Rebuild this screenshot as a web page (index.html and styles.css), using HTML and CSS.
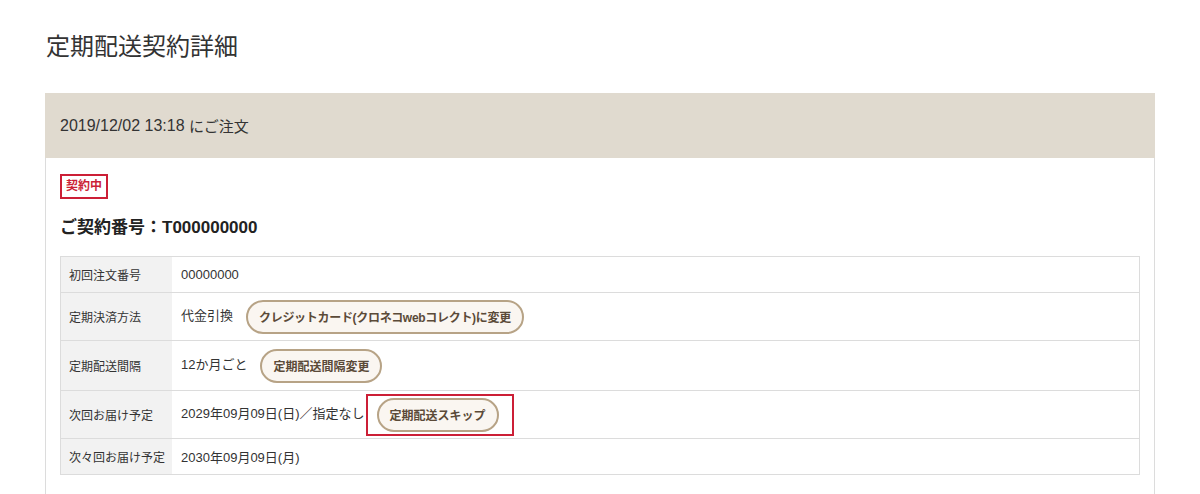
FILE: index.html
```html
<!DOCTYPE html>
<html lang="ja">
<head>
<meta charset="utf-8">
<title>定期配送契約詳細</title>
<link rel="stylesheet" href="styles.css">
</head>
<body>
<div class="page">
  <h1 class="title">定期配送契約詳細</h1>
  <section class="card">
    <div class="card-head">2019/12/02 13:18 <span class="jp">にご注文</span></div>
    <div class="card-body">
      <span class="badge">契約中</span>
      <h2 class="contract">ご契約番号：T000000000</h2>
      <table class="info">
        <tr class="r-s">
          <th>初回注文番号</th>
          <td>00000000</td>
        </tr>
        <tr class="r-m">
          <th>定期決済方法</th>
          <td>代金引換<button class="pill pill-tight">クレジットカード(クロネコwebコレクト)に変更</button></td>
        </tr>
        <tr class="r-l">
          <th>定期配送間隔</th>
          <td>12か月ごと<button class="pill">定期配送間隔変更</button></td>
        </tr>
        <tr class="r-m">
          <th>次回お届け予定</th>
          <td>2029年09月09日(日)／指定なし<span class="highlight"><button class="pill">定期配送スキップ</button></span></td>
        </tr>
        <tr class="r-s">
          <th>次々回お届け予定</th>
          <td>2030年09月09日(月)</td>
        </tr>
      </table>
    </div>
  </section>
</div>
</body>
</html>
```
FILE: styles.css
```css
html, body {
  margin: 0;
  padding: 0;
  background: #fff;
}
body {
  font-family: "Liberation Sans", "Noto Sans CJK JP", sans-serif;
  color: #333;
}
.page {
  padding: 29px 0 0 45px;
  width: 1110px;
}
.title {
  margin: 0 0 28px 1px;
  font-size: 24px;
  line-height: 36px;
  font-weight: normal;
  color: #333;
}
.card {
  border: 1px solid #dcdcdc;
  border-top: none;
  min-height: 420px;
}
.card-head {
  background: #e0dacf;
  height: 65px;
  display: flex;
  align-items: center;
  margin: 0 -1px;
  padding: 0 14px 0 15px;
  font-size: 16px;
  color: #333;
  white-space: pre;
}
.card-head .jp {
  font-size: 15px;
}
.card-body {
  padding: 16px 14px 0;
}
.badge {
  display: inline-block;
  border: 2px solid #cc1f36;
  color: #cc1f36;
  font-size: 12px;
  font-weight: bold;
  line-height: 17px;
  padding: 2px 4px;
}
.contract {
  margin: 17px 0 16px;
  font-size: 17px;
  line-height: 24px;
  font-weight: bold;
  color: #222;
}
.info {
  width: 100%;
  border-collapse: collapse;
  border: 1px solid #dcdcdc;
}
.info th, .info td {
  border-top: 1px solid #dcdcdc;
  border-bottom: 1px solid #dcdcdc;
  padding: 0;
  vertical-align: middle;
}
.info th {
  width: 103px;
  background: #f2f2f2;
  text-align: left;
  font-weight: normal;
  font-size: 12px;
  color: #333;
  padding-left: 8px;
  white-space: nowrap;
}
.info td {
  padding-left: 9px;
  font-size: 13px;
  color: #333;
}
.r-s { height: 36px; }
.r-m { height: 48px; }
.r-l { height: 50px; }
.pill {
  font-family: inherit;
  display: inline-block;
  vertical-align: middle;
  margin-left: 13px;
  height: 34px;
  padding: 0 11px;
  border: 2px solid #b7a386;
  border-radius: 17px;
  background: #faf6f1;
  color: #5b4a38;
  font-size: 12px;
  font-weight: bold;
}
.pill-tight {
  letter-spacing: -0.3px;
}
.highlight {
  display: inline-block;
  vertical-align: middle;
  margin-left: 1px;
  border: 2px solid #cc1f36;
  padding: 2px 13px 2px 9px;
}
.highlight .pill {
  margin-left: 0;
}
```
